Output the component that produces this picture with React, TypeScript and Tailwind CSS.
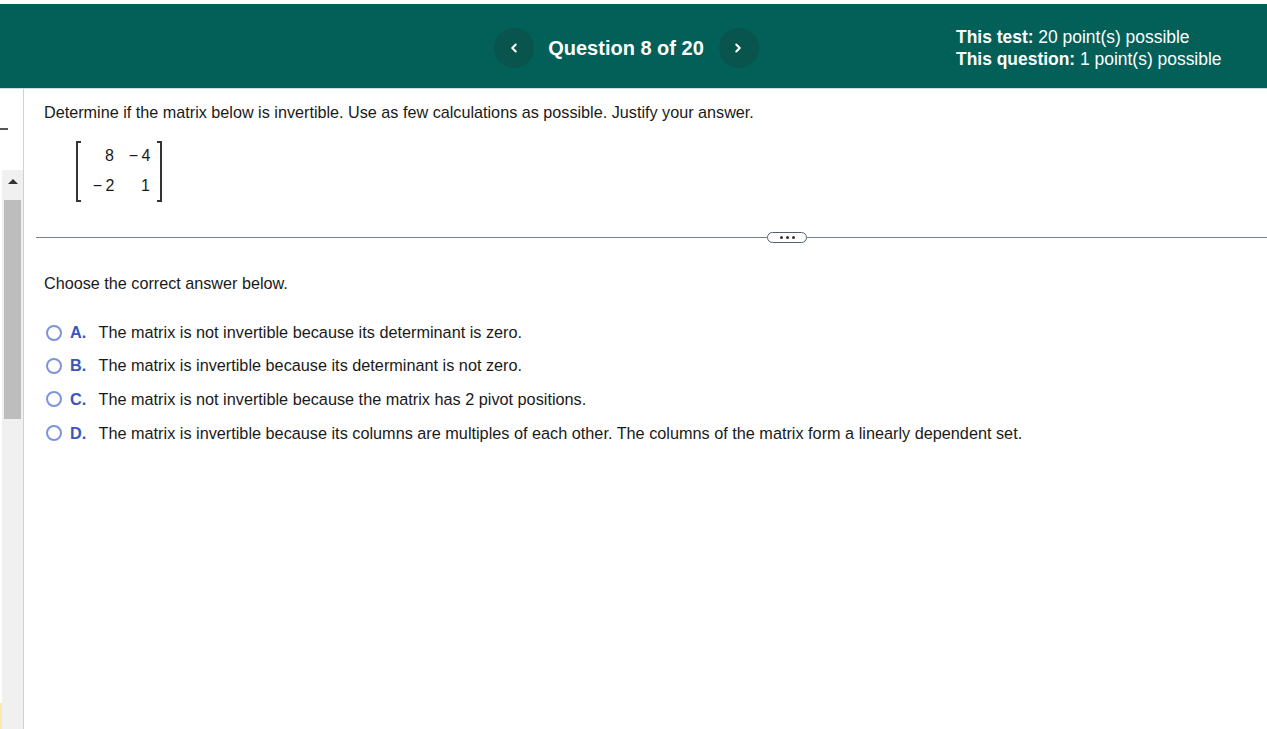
import React from 'react'
import { ChevronLeft, ChevronRight } from 'lucide-react'

const answers = [
  { letter: 'A.', text: 'The matrix is not invertible because its determinant is zero.', h: 'h-[33px]' },
  { letter: 'B.', text: 'The matrix is invertible because its determinant is not zero.', h: 'h-[33px]' },
  { letter: 'C.', text: 'The matrix is not invertible because the matrix has 2 pivot positions.', h: 'h-[34px]' },
  {
    letter: 'D.',
    text: 'The matrix is invertible because its columns are multiples of each other. The columns of the matrix form a linearly dependent set.',
    h: 'h-[34px]',
  },
]

function NavButton({ children }: { children: React.ReactNode }) {
  return (
    <button className="flex h-10 w-10 items-center justify-center rounded-full bg-[#0a544e] text-white">
      {children}
    </button>
  )
}

function Bracket({ side }: { side: 'left' | 'right' }) {
  return (
    <div
      className={
        side === 'left'
          ? 'h-[61px] w-[5px] border-y-2 border-l-2 border-[#333]'
          : 'h-[61px] w-[5px] border-y-2 border-r-2 border-[#333]'
      }
    />
  )
}

function Sidebar() {
  return (
    <aside className="flex h-[640px] w-6 shrink-0 flex-col border-r border-[#cfcfda]">
      <div className="mt-[39px] h-[2px] w-[8px] bg-[#555]" />
      <div className="mt-[40px] flex flex-1">
        <div className="flex w-[2px] flex-col justify-end">
          <div className="h-[26px] bg-[#fde7ae]" />
        </div>
        <div className="flex flex-1 flex-col bg-[#f0f0f0]">
          <div className="mb-[8px] flex h-[22px] items-center justify-center">
            <div className="h-0 w-0 border-x-[5px] border-b-[5px] border-x-transparent border-b-[#333]" />
          </div>
          <div className="mx-[2px] h-[219px] bg-[#bdbdbd]" />
        </div>
      </div>
    </aside>
  )
}

export default function App() {
  return (
    <div className="h-[729px] w-[1267px] overflow-hidden bg-white font-['Liberation_Sans',Arial,sans-serif] text-[#1a1a1a]">
      <header className="mt-1 flex h-[84px] items-center bg-[#026058] pt-1 text-white">
        <div className="ml-[494px] flex items-center">
          <NavButton>
            <ChevronLeft size={14} strokeWidth={3.5} className="-ml-[1px]" />
          </NavButton>
          <h1 className="w-[185px] pr-[1px] text-center text-[20px] font-bold">Question 8 of 20</h1>
          <NavButton>
            <ChevronRight size={14} strokeWidth={3.5} className="-ml-[2px]" />
          </NavButton>
        </div>
        <div className="ml-[197px] text-[17.45px] leading-[22px]">
          <p>
            <b>This test:</b> 20 point(s) possible
          </p>
          <p>
            <b>This question:</b> 1 point(s) possible
          </p>
        </div>
      </header>
      <div className="h-[1px] bg-[#d3d9e0]" />
      <div className="flex">
        <Sidebar />
        <main className="min-w-0 flex-1 pt-[13px]">
          <p className="ml-5 text-[16.2px] leading-5">
            Determine if the matrix below is invertible. Use as few calculations as possible. Justify your answer.
          </p>
          <div className="mt-[19px] ml-[52px] flex h-[61px] w-[86px] items-center">
            <Bracket side="left" />
            <div className="grid w-[76px] grid-cols-[33px_36px] gap-y-[12px] pb-[2px] text-right text-[16px] leading-[18px]">
              <span>8</span>
              <span className="tracking-[-0.5px]">− 4</span>
              <span className="tracking-[-0.5px]">− 2</span>
              <span>1</span>
            </div>
            <Bracket side="right" />
          </div>
          <div className="mt-[30px] ml-3 flex h-[11px] items-center">
            <div className="h-px w-[731px] bg-[#7a8288]" />
            <div className="flex h-[11px] w-10 items-center justify-center gap-[3px] rounded-full border-[1.5px] border-[#4f6272] bg-white">
              <span className="h-[3px] w-[3px] rounded-full bg-[#333]" />
              <span className="h-[3px] w-[3px] rounded-full bg-[#333]" />
              <span className="h-[3px] w-[3px] rounded-full bg-[#333]" />
            </div>
            <div className="h-px flex-1 bg-[#7a8288]" />
          </div>
          <p className="mt-[30px] ml-5 text-[16.2px] leading-5">Choose the correct answer below.</p>
          <ul className="mt-[23px] ml-[22px]">
            {answers.map((a) => (
              <li key={a.letter} className={`flex items-center text-[16.25px] ${a.h}`}>
                <span className="h-4 w-4 rounded-full border-2 border-[#7f93d8] bg-white" />
                <span className="ml-2 w-[28.5px] font-bold text-[#3a55c0]">{a.letter}</span>
                <span>{a.text}</span>
              </li>
            ))}
          </ul>
        </main>
      </div>
    </div>
  )
}
